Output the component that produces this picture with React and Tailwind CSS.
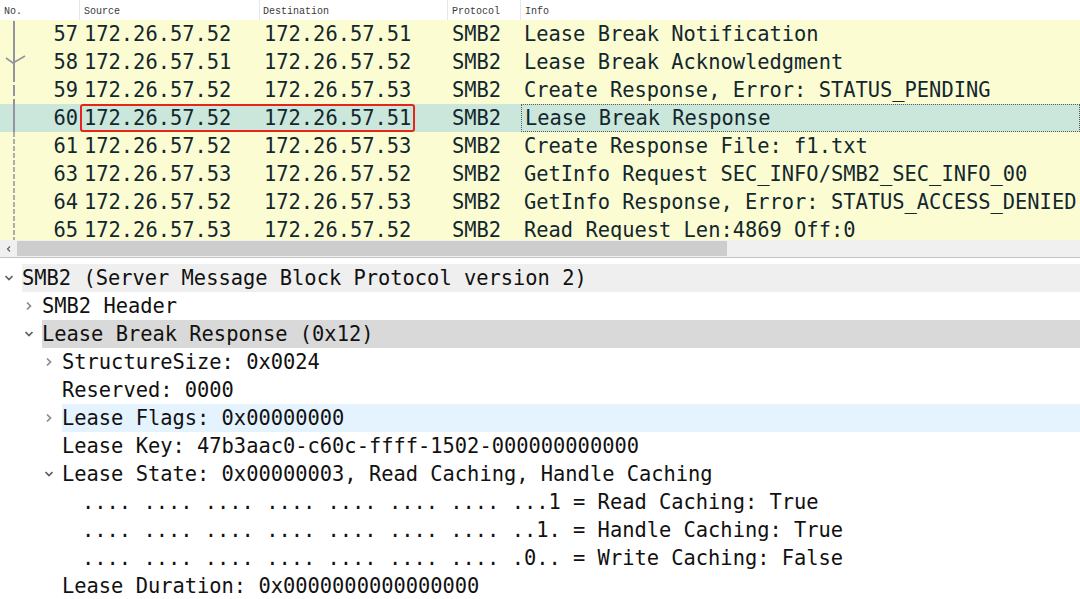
import React from "react";

const mono = { fontFamily: '"DejaVu Sans Mono", "Liberation Mono", monospace' };

const packets = [
  { no: 57, src: "172.26.57.52", dst: "172.26.57.51", info: "Lease Break Notification", mark: "top" },
  { no: 58, src: "172.26.57.51", dst: "172.26.57.52", info: "Lease Break Acknowledgment", mark: "ack" },
  { no: 59, src: "172.26.57.52", dst: "172.26.57.53", info: "Create Response, Error: STATUS_PENDING", mark: "gap" },
  { no: 60, src: "172.26.57.52", dst: "172.26.57.51", info: "Lease Break Response", mark: "solid", selected: true },
  { no: 61, src: "172.26.57.52", dst: "172.26.57.53", info: "Create Response File: f1.txt", mark: "dash" },
  { no: 63, src: "172.26.57.53", dst: "172.26.57.52", info: "GetInfo Request SEC_INFO/SMB2_SEC_INFO_00", mark: "dash" },
  { no: 64, src: "172.26.57.52", dst: "172.26.57.53", info: "GetInfo Response, Error: STATUS_ACCESS_DENIED", mark: "dash" },
  { no: 65, src: "172.26.57.53", dst: "172.26.57.52", info: "Read Request Len:4869 Off:0", mark: "dash" },
];

const tree = [
  { level: 0, arrow: "down", text: "SMB2 (Server Message Block Protocol version 2)", bg: "bg-[#efefef]" },
  { level: 1, arrow: "right", text: "SMB2 Header" },
  { level: 1, arrow: "down", text: "Lease Break Response (0x12)", bg: "bg-[#d9d9d9]" },
  { level: 2, arrow: "right", text: "StructureSize: 0x0024" },
  { level: 2, text: "Reserved: 0000" },
  { level: 2, arrow: "right", text: "Lease Flags: 0x00000000", bg: "bg-[#e5f3ff]" },
  { level: 2, text: "Lease Key: 47b3aac0-c60c-ffff-1502-000000000000" },
  { level: 2, arrow: "down", text: "Lease State: 0x00000003, Read Caching, Handle Caching" },
  { level: 3, text: ".... .... .... .... .... .... .... ...1 = Read Caching: True" },
  { level: 3, text: ".... .... .... .... .... .... .... ..1. = Handle Caching: True" },
  { level: 3, text: ".... .... .... .... .... .... .... .0.. = Write Caching: False" },
  { level: 2, text: "Lease Duration: 0x0000000000000000" },
];

const indent = ["pl-0", "pl-5", "pl-10", "pl-15"];

function RelationMark({ kind }) {
  const c = "#9494a0";
  return (
    <svg width="30" height="28" viewBox="0 0 30 28" className="shrink-0">
      {kind === "top" && <line x1="14" y1="1" x2="14" y2="28" stroke={c} strokeWidth="2" />}
      {kind === "ack" && (
        <>
          <line x1="14" y1="0" x2="14" y2="28" stroke={c} strokeWidth="2" />
          <polyline points="6,10 13,15 25,8" fill="none" stroke={c} strokeWidth="1.6" />
        </>
      )}
      {kind === "gap" && (
        <path d="M14 0 V6 M14 9 V20 M14 23 V28" stroke={c} strokeWidth="2" />
      )}
      {kind === "solid" && <line x1="14" y1="0" x2="14" y2="28" stroke={c} strokeWidth="2" />}
      {kind === "dash" && (
        <line x1="14" y1="0" x2="14" y2="28" stroke={c} strokeWidth="1.5" strokeDasharray="5 2" />
      )}
    </svg>
  );
}

function Chevron({ dir }) {
  if (!dir) return null;
  return (
    <svg width="10" height="10" viewBox="0 0 10 10" className="ml-[4px]">
      {dir === "down" ? (
        <polyline points="1.5,3 5,6.5 8.5,3" fill="none" stroke="#5e5e5e" strokeWidth="1.7" />
      ) : (
        <polyline points="3,1.5 6.5,5 3,8.5" fill="none" stroke="#8a8a8a" strokeWidth="1.7" />
      )}
    </svg>
  );
}

function PacketRow({ p }) {
  return (
    <div
      className={`relative flex h-[28px] items-center text-[20.4px] leading-none text-[#12272e] ${
        p.selected ? "bg-[#cbe6da]" : "bg-[#fcfcd3]"
      }`}
      style={mono}
    >
      <div className="flex w-[80px] shrink-0 items-center">
        <RelationMark kind={p.mark} />
        <span className="flex-1 pr-[2px] text-right">{p.no}</span>
      </div>
      <div className="w-[180px] shrink-0 pl-[4px]">{p.src}</div>
      <div className="w-[188px] shrink-0 pl-[4px]">{p.dst}</div>
      <div className="w-[73px] shrink-0 pl-[4px]">SMB2</div>
      <div
        className={`flex h-full flex-1 items-center whitespace-nowrap pl-[3px] ${
          p.selected ? "border border-dotted border-[#5a5a5a]" : ""
        }`}
      >
        {p.info}
      </div>
      {p.selected && (
        <div className="pointer-events-none absolute left-[80px] top-0 h-[28px] w-[335px] rounded-[3px] border-2 border-[#e5251c]" />
      )}
    </div>
  );
}

export default function App() {
  return (
    <div className="h-[599px] w-[1080px] overflow-hidden bg-white">
      <div className="h-[240px] overflow-hidden">
        <div
          className="flex h-[20px] items-center bg-white text-[10px] text-[#3a3a3a]"
          style={{ fontFamily: '"Liberation Mono", monospace' }}
        >
          <div className="h-full w-[80px] border-r border-[#e6e6e6] pl-[4px] pt-[4px]">No.</div>
          <div className="h-full w-[180px] border-r border-[#e6e6e6] pl-[4px] pt-[4px]">Source</div>
          <div className="h-full w-[188px] border-r border-[#e6e6e6] pl-[3px] pt-[4px]">Destination</div>
          <div className="h-full w-[73px] border-r border-[#e6e6e6] pl-[4px] pt-[4px]">Protocol</div>
          <div className="h-full flex-1 pl-[4px] pt-[4px]">Info</div>
        </div>
        {packets.map((p) => (
          <PacketRow key={p.no} p={p} />
        ))}
      </div>

      <div className="flex h-[17px] items-center bg-[#f0f0f0]">
        <div className="flex w-[17px] justify-center">
          <svg width="8" height="8" viewBox="0 0 8 8">
            <polyline points="5,1.5 2.5,4 5,6.5" fill="none" stroke="#606060" strokeWidth="1.2" />
          </svg>
        </div>
        <div className="h-[15px] w-[710px] bg-[#cdcdcd]" />
      </div>
      <div className="h-px bg-[#c4c4c4]" />
      <div className="h-[6px] bg-white" />

      <div className="text-[20.4px] leading-none text-[#111]" style={mono}>
        {tree.map((t, i) => (
          <div key={i} className={`flex h-[28px] items-center ${indent[t.level]}`}>
            <div className="flex w-[22px] shrink-0 items-center">
              <Chevron dir={t.arrow} />
            </div>
            <div className={`flex h-full flex-1 items-center whitespace-pre ${t.bg || ""}`}>{t.text}</div>
          </div>
        ))}
      </div>
    </div>
  );
}
